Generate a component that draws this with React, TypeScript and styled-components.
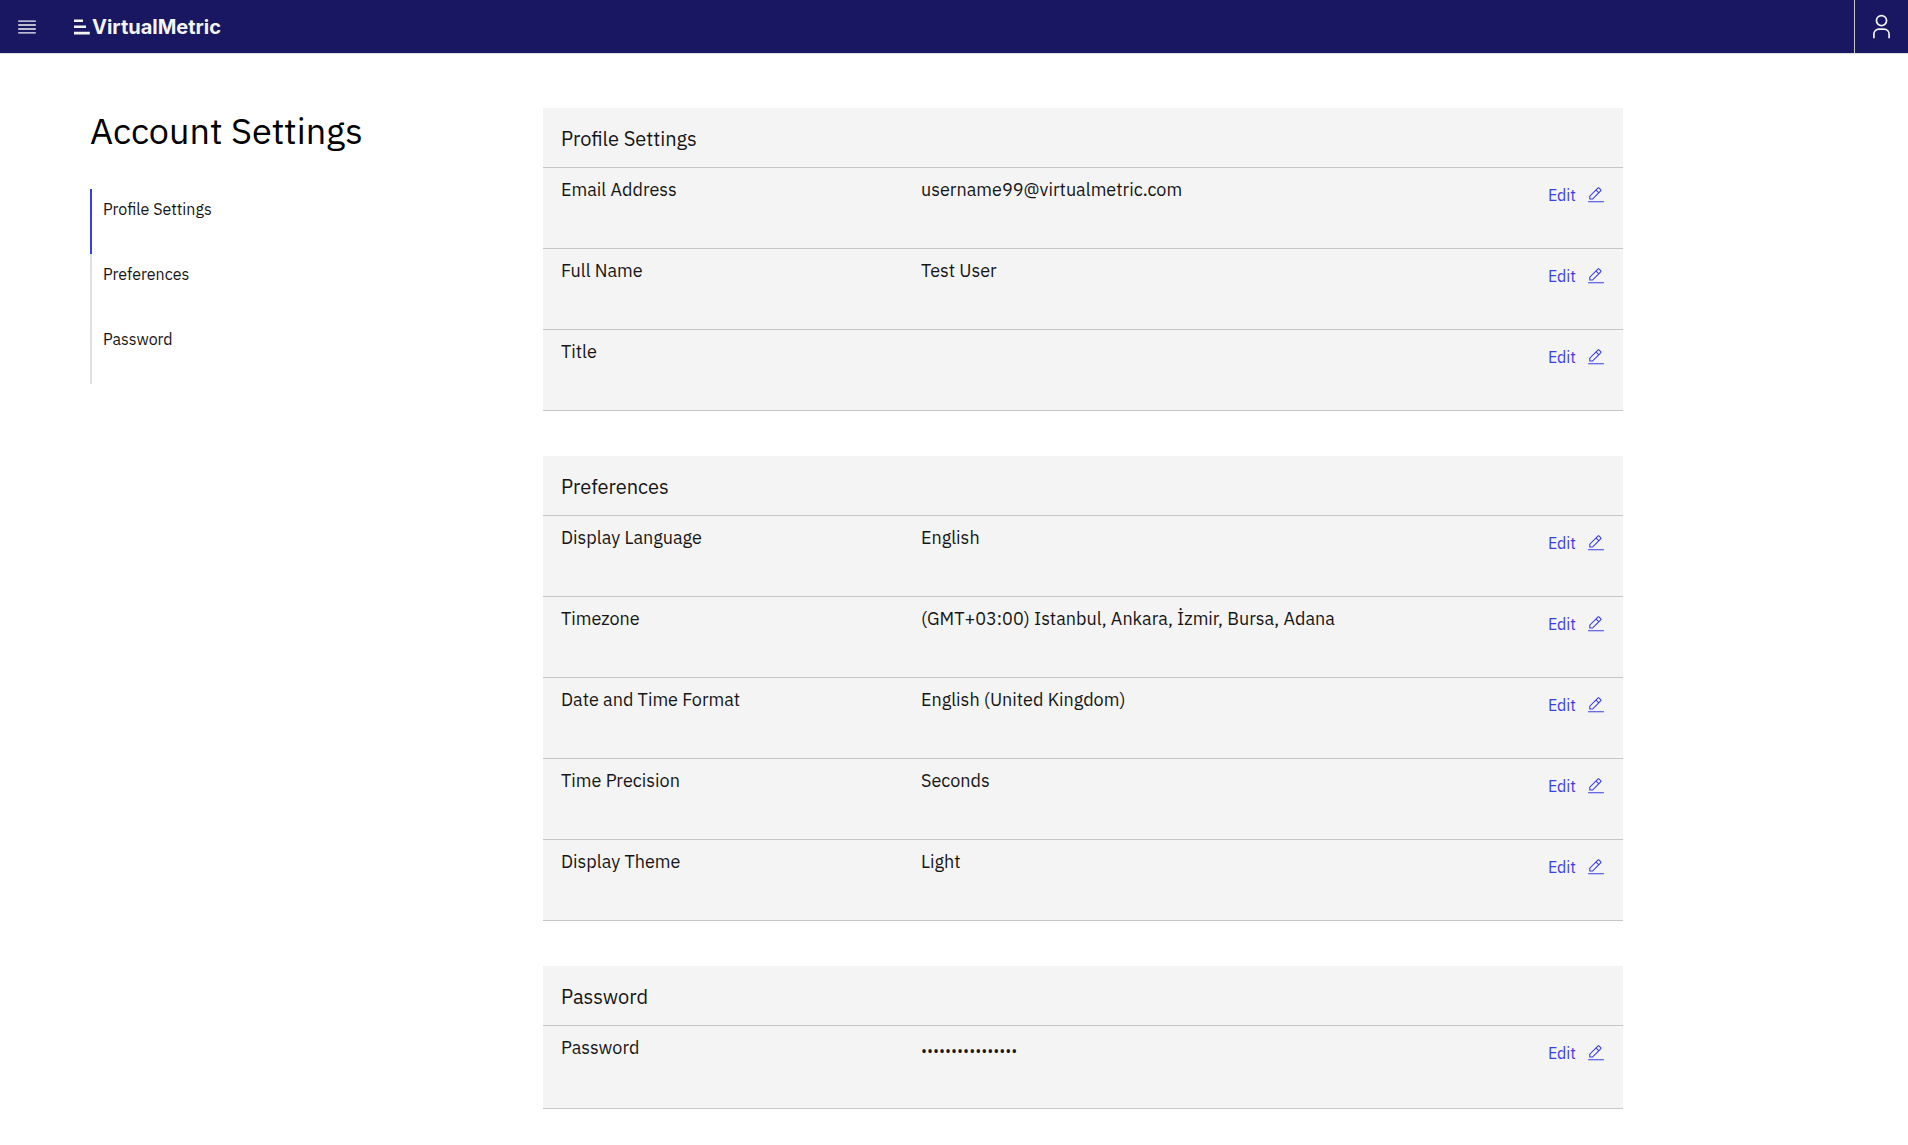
import React from 'react';
import styled, { createGlobalStyle } from 'styled-components';

const GlobalStyle = createGlobalStyle`
  *, *::before, *::after { box-sizing: border-box; }
  body {
    margin: 0;
    background: #ffffff;
    color: #161616;
    font-family: 'IBM Plex Sans', Roboto, 'Liberation Sans', sans-serif;
    font-size: 18px;
    line-height: 24px;
  }
  button { font: inherit; color: inherit; background: none; border: 0; padding: 0; cursor: pointer; }
`;

const Header = styled.header`
  display: flex;
  align-items: stretch;
  height: 54px;
  background: #191762;
  border-bottom: 1px solid #e0e0e0;
  color: #f4f4f4;
`;

const HeaderButton = styled.button<{ $divided?: boolean }>`
  display: flex;
  align-items: center;
  justify-content: center;
  width: 54px;
  border-left: ${(p) => (p.$divided ? '1px solid #c6c6c6' : '0')};
`;

const Brand = styled.a`
  display: flex;
  align-items: center;
  gap: 2px;
  margin-right: auto;
  padding-left: 20px;
  color: inherit;
  font-family: Inter, 'Liberation Sans', sans-serif;
  font-size: 20px;
  font-weight: 700;
  text-decoration: none;
`;

const Page = styled.div`
  display: grid;
  grid-template-columns: minmax(300px, 453px) minmax(0, 1080px);
  align-items: start;
  padding: 54px 90px 36px;
`;

const PageTitle = styled.h1`
  margin: 0 0 36px;
  color: #000000;
  font-size: 36px;
  font-weight: 400;
  line-height: 45px;
`;

const SideNav = styled.nav`
  display: flex;
  flex-direction: column;
`;

const SideLink = styled.a<{ $active?: boolean }>`
  height: 65px;
  padding: 10px 11px;
  border-left: 2px solid ${(p) => (p.$active ? '#3a3ee4' : '#e0e0e0')};
  color: #161616;
  font-size: 16px;
  line-height: 20px;
  text-decoration: none;
`;

const Sections = styled.main`
  display: flex;
  flex-direction: column;
  gap: 45px;
`;

const Card = styled.section`
  background: #f4f4f4;
`;

const CardTitle = styled.h2`
  margin: 0;
  padding: 19px 18px 16px;
  border-bottom: 1px solid #c6c6c6;
  font-size: 20px;
  font-weight: 400;
  line-height: 24px;
`;

const Row = styled.div<{ $tall?: boolean }>`
  display: grid;
  grid-template-columns: 1fr 2fr;
  min-height: ${(p) => (p.$tall ? 83 : 81)}px;
  padding: 10px 0;
  border-bottom: 1px solid #c6c6c6;
`;

const Label = styled.div`
  padding: 0 18px;
`;

const ValueCell = styled.div`
  display: flex;
  align-items: flex-start;
  justify-content: space-between;
  padding: 0 18px;
`;

const Value = styled.span``;

const MaskedValue = styled.span`
  font-family: 'Open Sans', 'Noto Sans', sans-serif;
  font-size: 16px;
  line-height: 30px;
`;

const EditButton = styled.button`
  display: flex;
  align-items: center;
  gap: 11px;
  height: 33px;
  color: #3a3ee4;
  font-size: 16px;
  line-height: 20px;
`;

const MenuIcon = () => (
  <svg width="22" height="22" viewBox="0 0 20 20" fill="currentColor" aria-hidden="true">
    <path d="M2 14.8h16V16H2zM2 11.2h16v1.2H2zM2 7.6h16v1.2H2zM2 4h16v1.2H2z" />
  </svg>
);

const UserIcon = () => (
  <svg width="27" height="27" viewBox="0 0 32 32" fill="currentColor" aria-hidden="true">
    <path d="M16 4a5 5 0 1 1-5 5 5 5 0 0 1 5-5m0-2a7 7 0 1 0 7 7 7 7 0 0 0-7-7zM26 30h-2v-5a5 5 0 0 0-5-5h-6a5 5 0 0 0-5 5v5H6v-5a7 7 0 0 1 7-7h6a7 7 0 0 1 7 7z" />
  </svg>
);

const EditIcon = () => (
  <svg width="18" height="18" viewBox="0 0 32 32" fill="currentColor" aria-hidden="true">
    <path d="M2 27h28v2H2zM25.4 9c.8-.8.8-2 0-2.8l-3.6-3.6c-.8-.8-2-.8-2.8 0l-15 15V24h6.4l15-15zm-5-5L24 7.6l-3 3L17.4 7l3-3zM6 22v-3.6l10-10 3.6 3.6-10 10H6z" />
  </svg>
);

const LogoMark = () => (
  <svg width="16" height="16" viewBox="0 0 16 16" fill="currentColor" aria-hidden="true">
    <path d="M0 .4h9v2.5H0zM0 6.6h12v2.5H0zM0 12.8h15.8v2.8H0z" />
  </svg>
);

interface Setting {
  label: string;
  value: string;
  masked?: boolean;
}

const sections: { id: string; title: string; settings: Setting[] }[] = [
  {
    id: 'profile-settings',
    title: 'Profile Settings',
    settings: [
      { label: 'Email Address', value: 'username99@virtualmetric.com' },
      { label: 'Full Name', value: 'Test User' },
      { label: 'Title', value: '' },
    ],
  },
  {
    id: 'preferences',
    title: 'Preferences',
    settings: [
      { label: 'Display Language', value: 'English' },
      { label: 'Timezone', value: '(GMT+03:00) Istanbul, Ankara, İzmir, Bursa, Adana' },
      { label: 'Date and Time Format', value: 'English (United Kingdom)' },
      { label: 'Time Precision', value: 'Seconds' },
      { label: 'Display Theme', value: 'Light' },
    ],
  },
  {
    id: 'password',
    title: 'Password',
    settings: [{ label: 'Password', value: '••••••••••••••••', masked: true }],
  },
];

export default function App() {
  return (
    <>
      <GlobalStyle />
      <Header>
        <HeaderButton type="button" aria-label="Open menu">
          <MenuIcon />
        </HeaderButton>
        <Brand href="#">
          <LogoMark />
          VirtualMetric
        </Brand>
        <HeaderButton type="button" aria-label="User profile" $divided>
          <UserIcon />
        </HeaderButton>
      </Header>
      <Page>
        <aside>
          <PageTitle>Account Settings</PageTitle>
          <SideNav aria-label="Account settings">
            {sections.map((s, i) => (
              <SideLink key={s.id} href={`#${s.id}`} $active={i === 0}>
                {s.title}
              </SideLink>
            ))}
          </SideNav>
        </aside>
        <Sections>
          {sections.map((s) => (
            <Card key={s.id} id={s.id}>
              <CardTitle>{s.title}</CardTitle>
              {s.settings.map((r) => (
                <Row key={r.label} $tall={r.masked}>
                  <Label>{r.label}</Label>
                  <ValueCell>
                    {r.masked ? <MaskedValue>{r.value}</MaskedValue> : <Value>{r.value}</Value>}
                    <EditButton type="button" aria-label={`Edit ${r.label}`}>
                      Edit
                      <EditIcon />
                    </EditButton>
                  </ValueCell>
                </Row>
              ))}
            </Card>
          ))}
        </Sections>
      </Page>
    </>
  );
}
